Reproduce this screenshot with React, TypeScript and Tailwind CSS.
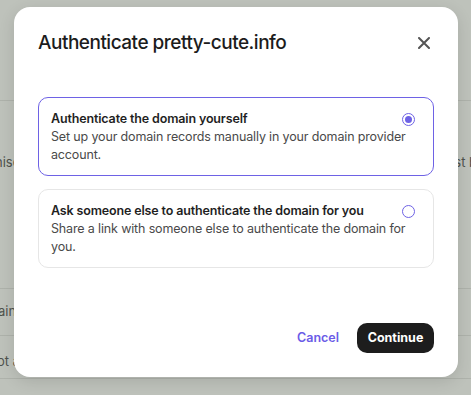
import { useState } from "react";

const options = [
  {
    id: "self",
    title: "Authenticate the domain yourself",
    description: "Set up your domain records manually in your domain provider account.",
  },
  {
    id: "other",
    title: "Ask someone else to authenticate the domain for you",
    description: "Share a link with someone else to authenticate the domain for you.",
  },
];

const Backdrop = () => (
  <div className="w-full h-[395px] bg-[#bec2bb] text-[13px] leading-[18px] text-[#4f524d] overflow-hidden">
    <div className="h-[101px] border-b border-[#aeb2ab]" />
    <div className="h-[188px] border-b border-[#aeb2ab] flex items-start whitespace-nowrap pt-[52px]">
      <span className="-ml-[5px]">nise</span>
      <span className="ml-auto -mr-[6px]">st b</span>
    </div>
    <div className="h-[47px] border-b border-[#aeb2ab] flex items-start whitespace-nowrap pt-[13px]">
      <span className="-ml-[2px]">ain</span>
    </div>
    <div className="h-[43px] border-b border-[#aeb2ab] flex items-start whitespace-nowrap pt-[16px]">
      <span className="-ml-[3px]">ot a</span>
    </div>
  </div>
);

const Radio = ({ checked }: { checked: boolean }) => (
  <span className="mt-[3px] w-[13px] h-[13px] shrink-0 rounded-full border-[1.5px] border-[#6e62e5] flex items-center justify-center">
    {checked && <span className="w-[7px] h-[7px] rounded-full bg-[#6e62e5]" />}
  </span>
);

export default function App() {
  const [selected, setSelected] = useState("self");

  return (
    <div className="relative w-[471px] h-[395px] overflow-hidden" style={{ fontFamily: "Inter, 'Liberation Sans', sans-serif" }}>
      <Backdrop />
      <div className="absolute left-[14px] top-[7px] w-[444px] h-[370px] bg-white rounded-[16px] shadow-[0_4px_16px_rgba(0,0,0,0.12)] px-6 pt-6 pb-6 flex flex-col">
        <div className="flex items-center justify-between h-[24px]">
          <h2 className="text-[19px] font-medium text-[#1c1c1c] tracking-[-0.5px]">Authenticate pretty-cute.info</h2>
          <button className="w-[20px] h-[20px] flex items-center justify-center text-[#555]">
            <svg width="12" height="12" viewBox="0 0 12 12" fill="none" stroke="currentColor" strokeWidth="2" strokeLinecap="round">
              <path d="M1 1L11 11M11 1L1 11" />
            </svg>
          </button>
        </div>

        <div className="mt-[42px] flex flex-col gap-[13px]">
          {options.map((o) => {
            const active = selected === o.id;
            return (
              <div
                key={o.id}
                onClick={() => setSelected(o.id)}
                className={`rounded-[10px] border pl-[12px] pr-[18px] pt-[12px] pb-[11px] flex cursor-pointer ${
                  active ? "border-[#6e62e5]" : "border-[#e6e6e6]"
                }`}
              >
                <div className="flex-1 min-w-0 text-[12.5px] leading-[18px] tracking-[-0.15px] -mr-[4px]">
                  <div className="font-semibold text-[#1f1f1f]">{o.title}</div>
                  <div className="text-[#4a4a4a]">{o.description}</div>
                </div>
                <Radio checked={active} />
              </div>
            );
          })}
        </div>

        <div className="mt-auto flex items-center justify-end gap-[18px]">
          <button className="text-[12.5px] font-semibold text-[#6b5ce7]">Cancel</button>
          <button className="h-[30px] w-[77px] rounded-[10px] bg-[#1d1d1d] text-white text-[12.5px] font-bold">Continue</button>
        </div>
      </div>
    </div>
  );
}
